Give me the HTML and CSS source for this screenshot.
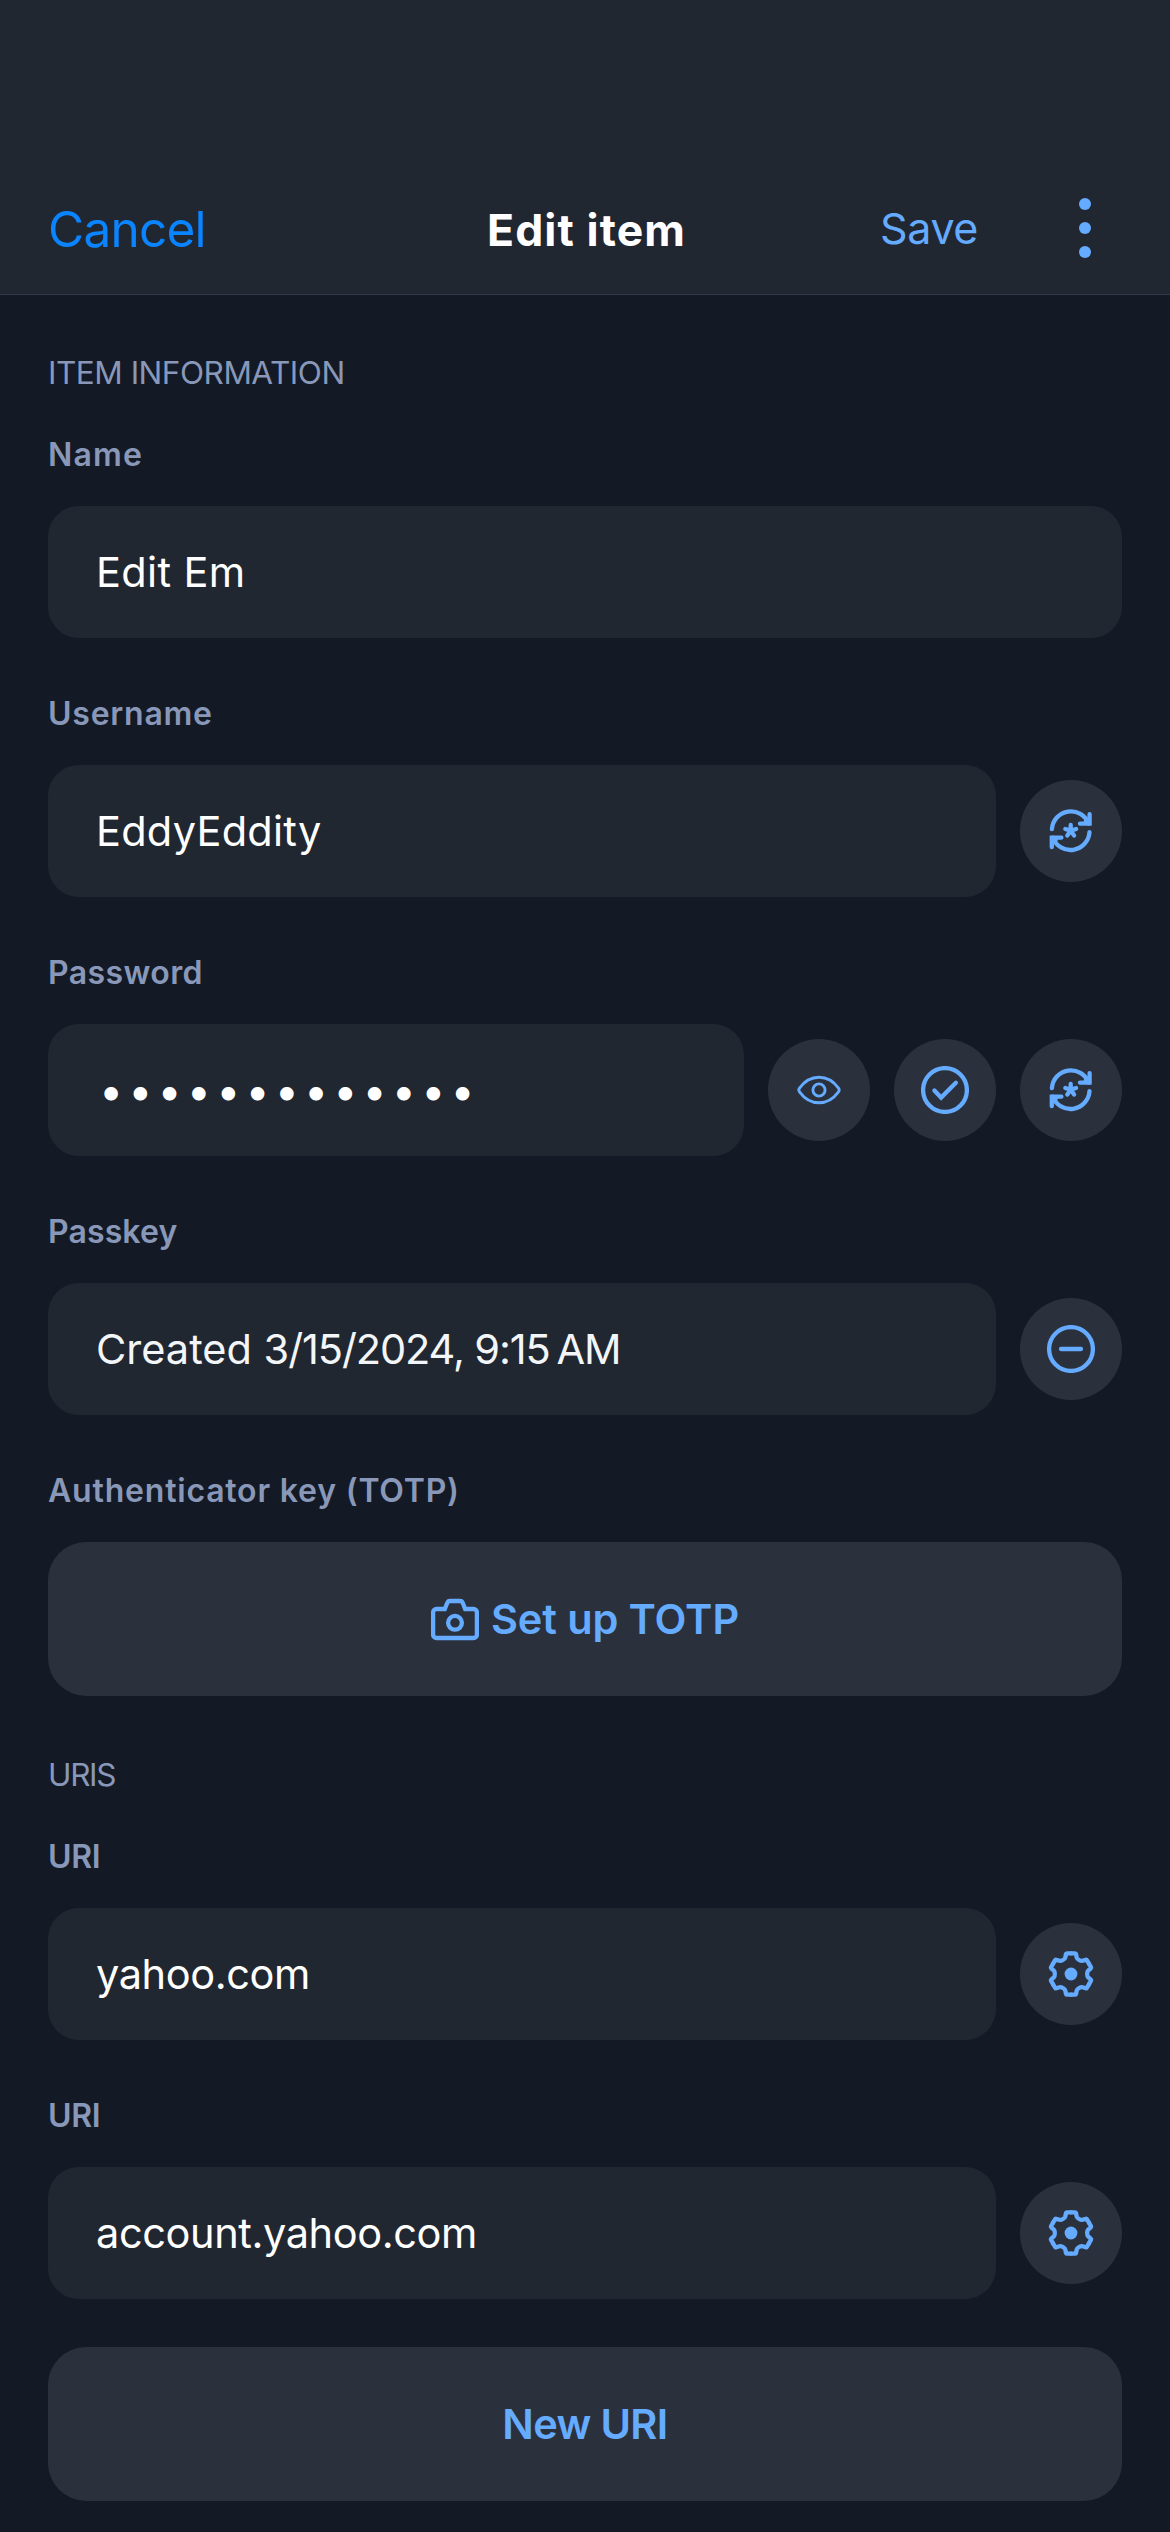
FILE: index.html
```
<!DOCTYPE html>
<html lang="en">
<head>
<meta charset="utf-8">
<title>Edit item</title>
<link rel="stylesheet" href="styles.css">
</head>
<body>
<svg class="sprite" aria-hidden="true">
  <symbol id="generate" viewBox="0 0 48 48">
    <path d="M4.9 22.2A19 19 0 0 1 41.6 16.6"/>
    <path d="M33 16.7H42.6V7.2"/>
    <path d="M42.5 25.2A19 19 0 0 1 5.8 30.8"/>
    <path d="M14.4 30.7H4.8V40.2"/>
    <path class="filled" d="M37.5 11.5L41.5 12V17H36zM9.9 35.9L5.9 35.4V30.4H11.4z"/>
    <path d="M23.7 23.8V18M23.7 23.8L18.3 22M23.7 23.8L29.1 22M23.7 23.8L20.3 28.6M23.7 23.8L27.1 28.6"/>
  </symbol>
  <symbol id="eye" viewBox="0 0 48 48">
    <path d="M4.5 22.2C9 16 16 11.3 24 11.3S39 16 43.5 22.2A3 3 0 0 1 43.5 25.8C39 32 32 36.7 24 36.7S9 32 4.5 25.8A3 3 0 0 1 4.5 22.2Z"/>
    <circle cx="24" cy="24" r="6.1"/>
  </symbol>
  <symbol id="check" viewBox="0 0 48 48">
    <circle cx="24" cy="24" r="21.9"/>
    <path d="M13.4 24.6L20.1 31.6L34.9 16.8"/>
  </symbol>
  <symbol id="minus" viewBox="0 0 48 48">
    <circle cx="24" cy="24" r="21.9"/>
    <path d="M14 24H34"/>
  </symbol>
  <symbol id="camera" viewBox="0 0 48 48">
    <path d="M5.5 14H13.8L16.2 8Q17 6 19 6H29Q31 6 31.8 8L34.2 14H42.5A3.4 3.4 0 0 1 45.9 17.5V39.5A3.4 3.4 0 0 1 42.5 43H5.5A3.4 3.4 0 0 1 2.1 39.5V17.5A3.4 3.4 0 0 1 5.5 14Z"/>
    <circle cx="24" cy="27.8" r="6.9"/>
  </symbol>
  <symbol id="gear" viewBox="-24 -24 48 48">
    <g id="tooth"><path d="M0-20.7H4.2Q4.9-20.7 5-20L5.7-16.5Q6-15.2 8.08-14Q10.16-12.8 11.44-13.19L14.82-14.33Q15.48-14.6 15.83-13.99L17.93-10.35"/></g>
    <use href="#tooth" transform="rotate(60)"/>
    <use href="#tooth" transform="rotate(120)"/>
    <use href="#tooth" transform="rotate(180)"/>
    <use href="#tooth" transform="rotate(240)"/>
    <use href="#tooth" transform="rotate(300)"/>
    <circle class="filled" r="6.4"/>
  </symbol>
</svg>

<header class="navbar">
  <span class="cancel">Cancel</span>
  <h1 class="title">Edit item</h1>
  <div class="actions">
    <span class="save">Save</span>
    <svg class="more" viewBox="0 0 12 60"><circle cx="6" cy="6" r="6"/><circle cx="6" cy="30" r="6"/><circle cx="6" cy="54" r="6"/></svg>
  </div>
</header>

<main class="form">
  <h2 class="section">ITEM INFORMATION</h2>

  <div class="field">
    <div class="label ls-name">Name</div>
    <div class="row"><div class="input ls-edit">Edit Em</div></div>
  </div>

  <div class="field">
    <div class="label ls-username">Username</div>
    <div class="row">
      <div class="input ls-eddy">EddyEddity</div>
      <div class="round"><svg class="icon"><use href="#generate"/></svg></div>
    </div>
  </div>

  <div class="field">
    <div class="label ls-password">Password</div>
    <div class="row">
      <div class="input secret">•••••••••••••</div>
      <div class="round"><svg class="icon thin"><use href="#eye"/></svg></div>
      <div class="round"><svg class="icon"><use href="#check"/></svg></div>
      <div class="round"><svg class="icon"><use href="#generate"/></svg></div>
    </div>
  </div>

  <div class="field">
    <div class="label ls-passkey">Passkey</div>
    <div class="row">
      <div class="input readonly">Created <span class="date">3/15/2024, 9:15<span class="narrow"> </span>AM</span></div>
      <div class="round"><svg class="icon"><use href="#minus"/></svg></div>
    </div>
  </div>

  <div class="field">
    <div class="label ls-totp">Authenticator key (TOTP)</div>
    <div class="button"><svg class="icon"><use href="#camera"/></svg><span>Set up TOTP</span></div>
  </div>

  <h2 class="section uris">URIS</h2>

  <div class="field">
    <div class="label ls-uri">URI</div>
    <div class="row">
      <div class="input ls-url">yahoo.com</div>
      <div class="round"><svg class="icon"><use href="#gear"/></svg></div>
    </div>
  </div>

  <div class="field">
    <div class="label ls-uri">URI</div>
    <div class="row">
      <div class="input ls-url">account.yahoo.com</div>
      <div class="round"><svg class="icon"><use href="#gear"/></svg></div>
    </div>
  </div>

  <div class="button new-uri">New URI</div>
</main>
</body>
</html>
```

FILE: styles.css
```
* { box-sizing: border-box; }

body {
  margin: 0;
  width: 1170px;
  height: 2532px;
  overflow: hidden;
  background: #131a26;
  font-family: "Inter", "Liberation Sans", sans-serif;
  color: #fff;
}

h1, h2 { margin: 0; }

.sprite { display: none; }

/* Navigation bar */
.navbar {
  display: grid;
  grid-template-columns: 1fr auto 1fr;
  align-items: center;
  height: 295px;
  padding: 162px 79px 0 48px;
  column-gap: 16px;
  background: #212731;
  border-bottom: 1px solid #323946;
}

.cancel {
  padding-top: 2px;
  font-size: 49.5px;
  letter-spacing: -0.75px;
  color: #0a84ff;
}

.title {
  padding: 4px 0 0 34px;
  font-size: 44.5px;
  font-weight: 700;
  letter-spacing: 1.1px;
}

.actions {
  display: flex;
  align-items: center;
  justify-content: flex-end;
  gap: 101px;
}

.save {
  font-size: 43px;
  font-weight: 400;
  letter-spacing: -0.4px;
  color: #65abff;
}

.more {
  width: 12px;
  height: 60px;
  fill: #65abff;
}

/* Form */
.form { padding: 58px 48px 0; }

.section {
  height: 40px;
  margin-bottom: 41px;
  font-size: 31.5px;
  font-weight: 400;
  line-height: 40px;
  letter-spacing: -0.48px;
  color: #8998b8;
}

.section.uris {
  margin-top: 59px;
  letter-spacing: -1.3px;
}

.field + .field { margin-top: 55px; }

.label {
  height: 40px;
  margin-bottom: 32px;
  font-size: 32px;
  font-weight: 600;
  line-height: 42px;
  color: #8998b8;
}

.row {
  display: flex;
  align-items: center;
  gap: 24px;
}

.input {
  flex: 1;
  height: 132px;
  padding: 0 48px;
  border-radius: 31px;
  background: #212731;
  font-size: 41.5px;
  font-weight: 400;
  line-height: 132px;
  white-space: nowrap;
}

.readonly { color: #f3f6f9; }
.date { letter-spacing: -1.1px; }
.narrow { letter-spacing: -5px; }

.secret {
  padding-left: 51px;
  font-size: 43px;
  line-height: 133px;
  letter-spacing: 5.1px;
}

.round {
  display: flex;
  align-items: center;
  justify-content: center;
  width: 102px;
  height: 102px;
  border-radius: 50%;
  background: #2b313c;
}

.icon {
  width: 48px;
  height: 48px;
  fill: none;
  stroke: #65abff;
  stroke-width: 4.3px;
  stroke-linecap: round;
}

.thin { stroke-width: 2.9px; }
.filled { fill: #65abff; stroke: none; }

.button {
  display: flex;
  align-items: center;
  justify-content: center;
  gap: 12px;
  height: 154px;
  border-radius: 38px;
  background: #2b313c;
  color: #65abff;
  font-size: 41.5px;
  font-weight: 600;
  letter-spacing: -0.1px;
}

.new-uri {
  margin-top: 48px;
  letter-spacing: -0.65px;
}

/* Per-string tracking */
.ls-name { letter-spacing: 1.2px; }
.ls-username { letter-spacing: 0.75px; }
.ls-password { letter-spacing: 0.4px; }
.ls-passkey { letter-spacing: 0.12px; }
.ls-totp { letter-spacing: 0.8px; }
.ls-uri { letter-spacing: -0.3px; }
.ls-edit { letter-spacing: 0.35px; }
.ls-eddy { letter-spacing: 0.25px; }
.ls-url { letter-spacing: -0.4px; }
```
